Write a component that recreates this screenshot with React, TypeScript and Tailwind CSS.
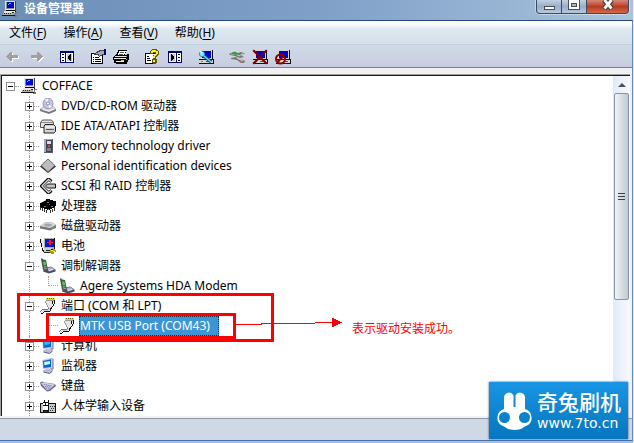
import type { ReactNode } from "react";

function Pix({ children }: { children: ReactNode }) {
  return (
    <svg
      viewBox="0 0 16 16"
      className="size-4 shrink-0"
      shapeRendering="crispEdges"
      aria-hidden="true"
    >
      {children}
    </svg>
  );
}

function ComputerIcon() {
  return (
    <Pix>
      <path d="M4 0h10v10H4z" fill="#444" />
      <path d="M3 0h10v9H3z" fill="#e4e4e4" />
      <path d="M4 1h8v7H4z" fill="#8c8c8c" />
      <path d="M5 1h7v6H5z" fill="#0000d8" />
      <path d="M7 2h2v1H7zM6 3h1v1H6z" fill="#3fd0ff" />
      <path d="M4 9h9v1H4z" fill="#000" />
      <path d="M2 10h11v2H2z" fill="#e8e8e8" />
      <path d="M1 12h11v2H1z" fill="#b0b0b0" />
      <path d="M2 12h1v1H2zM4 12h1v1H4zM6 12h1v1H6zM8 12h1v1H8zM10 11h2v1h-2z" fill="#222" />
      <path d="M0 14h13v1H0zM13 10h1v3h-1z" fill="#111" />
      <path d="M13 11h3v1h-2v2h1v2h-3v-1h1z" fill="#777" />
    </Pix>
  );
}

function DiscIcon() {
  return (
    <Pix>
      <g shapeRendering="auto">
        <path d="M0 11l4-3h9l3 3v2l-7 3-9-3z" fill="#77777f" />
        <path d="M0 11l4-3h9l3 3-7 3z" fill="#d6d6da" />
        <ellipse cx="8" cy="5.500" rx="5" ry="5.300" fill="#c3c3e4" stroke="#8585a4" strokeWidth=".8" />
        <path d="M8 5.500L5 1.500l3-1zM8 5.500l4 3-3 2z" fill="#f2f2ff" />
        <circle cx="8" cy="5.500" r="1.500" fill="#fff" stroke="#6666a0" strokeWidth=".7" />
        <path d="M3 11.500l6 1.500 5-2" fill="none" stroke="#f7f7f7" />
      </g>
    </Pix>
  );
}

function ControllerIcon() {
  return (
    <Pix>
      <g shapeRendering="auto" strokeLinejoin="round">
        <path d="M.500 4.500l2-2.500h9l2 2.500v5H.500z" fill="#e5e5e5" stroke="#444" strokeWidth=".9" />
        <path d="M1 4.500h12" stroke="#888" />
        <path d="M4 8.500L5 6.500h8.500l2 2v5l-1.500 1.500H4z" fill="#d2d2d2" stroke="#222" />
        <path d="M5 9h10" stroke="#fff" />
        <path d="M6 11.500h6" stroke="#555" />
        <path d="M12 11.500h2" stroke="#22a322" />
      </g>
    </Pix>
  );
}

function MemoryIcon() {
  return (
    <Pix>
      <path d="M4 1h9v14H4z" fill="#555b66" />
      <path d="M4 1h8v13H4z" fill="#a5abb5" />
      <path d="M6 2h6v12H6z" fill="#3d4250" />
      <path d="M7 3h4v3H7z" fill="#d8dde6" />
      <path d="M8 7h2v2H8z" fill="#d84a2a" />
      <path d="M7 10h4v3H7z" fill="#7b8393" />
    </Pix>
  );
}

function DiamondIcon() {
  return (
    <Pix>
      <g shapeRendering="auto">
        <path d="M8 2l8 6.500L8 15 0 8.500z" fill="#222" />
        <path d="M8 1l7 6.500L8 14 1 7.500z" fill="#bdbdbd" stroke="#555" strokeWidth=".8" />
      </g>
    </Pix>
  );
}

function ScsiIcon() {
  return (
    <Pix>
      <g shapeRendering="auto" fill="none">
        <path d="M11.500 3.500L8.500 1 1.500 8l7 7 3-2.500" stroke="#111" strokeWidth="3.200" />
        <path d="M11 3.500L8.500 1.500 2 8l6.500 6.500L11 12.500" stroke="#d8d8d8" strokeWidth="1.400" />
        <path d="M7.500 6h8v4h-8L5.500 8z" fill="#c5c5c5" stroke="#111" />
      </g>
    </Pix>
  );
}

function ChipIcon() {
  return (
    <Pix>
      <path d="M6 1h4v1h3v1h3v5h-1v2h-3v1h-2v1H7v-1H4v-1H1V9H0V5h2V4h2V3h2z" fill="#000" />
      <path d="M5 2h1v1H5zM3 3h1v1H3zM1 4h1v1H1zM8 11h1v1H8z" fill="#888" />
      <path d="M0 9h1v3H0zM2 10h1v3H2zM4 11h1v3H4zM6 12h1v3H6zM10 12h1v3h-1zM12 11h1v3h-1zM14 9h1v4h-1z" fill="#333" />
      <path d="M7 4h2v1H7zM9 6h1v1H9zM4 8h2v1H4zM11 8h2v1h-2z" fill="#777" />
    </Pix>
  );
}

function DriveIcon() {
  return (
    <Pix>
      <g shapeRendering="auto">
        <path d="M0 8l5-3.500h7l4 2.500v3l-6 2.500-10-2z" fill="#77777b" />
        <path d="M0 8l5-3.500h7l4 2.500-6 3z" fill="#d9d9db" />
        <ellipse cx="8" cy="7" rx="4" ry="1.500" fill="#a6a6ac" />
        <path d="M12 10.500l2-1" stroke="#51c851" strokeWidth="1.200" />
      </g>
    </Pix>
  );
}

function BatteryIcon() {
  return (
    <Pix>
      <path d="M4 0h11v12H4z" fill="#111" />
      <path d="M4 0h10v11H4z" fill="#b4b4b4" />
      <path d="M5 1h9v8H5z" fill="#0018d8" />
      <path d="M9 2h2v5H9zM7 4h6v1H7z" fill="#f02020" />
      <path d="M0 1h1v4h1v4h1v3h3v2H3v-1H2V9H1V5H0z" fill="#111" />
      <path d="M1 1h1v4H1zM2 2h2v8H2z" fill="#e4e4e4" />
      <path d="M4 10h7v4H4z" fill="#ccc" />
      <path d="M4 14h8v1H4zM6 12h4v1H6z" fill="#222" />
      <path d="M10 12h3v-1h2v1h1v2h-2v2h-3v-1h-1z" fill="#a69b00" />
      <path d="M11 12h2v1h-2zM13 13h2v1h-2z" fill="#fff04a" />
    </Pix>
  );
}

function ModemIcon() {
  return (
    <Pix>
      <g shapeRendering="auto">
        <path d="M5 10l6-1.500 4.500 3v2L9 15.500 3 13.500z" fill="#4a4a60" />
        <path d="M6 10.500l5-1.500 4 2.500-6 2z" fill="#b4b4cc" />
        <path d="M1 1l1-1 1 1.500 3 .5 2 10-3 1.500L3 12z" fill="#4a5252" />
        <path d="M3 3.500l2.500.2.700 3.300-2.500.5z" fill="#3fdc3f" />
        <path d="M4 9l2.300-.3M4.300 10.800l2.300-.3" stroke="#ccc" strokeWidth=".8" />
        <path d="M9 12.500l4-1.200" stroke="#eee" strokeWidth=".8" />
      </g>
    </Pix>
  );
}

function PortIcon() {
  return (
    <Pix>
      <path d="M6 0h9v2H6z" fill="#e8dc28" />
      <path d="M7 0h1v1H7zM9 0h1v1H9zM11 0h1v1h-1zM13 0h1v1h-1z" fill="#5e5a10" />
      <path d="M6 2h9v1H6zM5 3h1v2H5zM6 5h1v2H6zM7 7h1v2H7zM8 9h1v1H8z" fill="#9a9a9a" />
      <path d="M6 3h8v2H6zM7 5h6v2H7zM8 7h4v2H8zM9 9h2v1H9z" fill="#e6e6e6" />
      <path d="M14 2h1v4h-1zM13 6h1v2h-1zM12 8h1v1h-1zM11 9h1v2h-1zM12 3h1v3h-1z" fill="#111" />
      <path d="M8 10h1v1H8zM7 11h1v1H7zM2 11h5v1H2zM1 12h1v1H1zM0 13h1v1H0z" fill="#777" />
      <path d="M9 10h1v2H9zM8 11h1v2H8zM3 12h5v1H3zM2 13h1v1H2zM1 14h1v1H1z" fill="#d4d4d4" />
      <path d="M10 10h1v3h-1zM9 13h1v1H9zM4 13h5v1H4zM3 14h1v1H3zM1 15h2v1H1z" fill="#111" />
    </Pix>
  );
}

function MonitorIcon({ dish = false }: { dish?: boolean }) {
  return (
    <Pix>
      <g shapeRendering="auto">
        <path d="M11 0l2.500 1v10l-3.500 2z" fill="#6c769c" />
        <path d="M2 2l9-2 1.500 1v9.500L3 11z" fill="#c4cce8" />
        <path d="M3 3l8-1.700V9L3.500 10z" fill="#0468d0" />
        <path d="M4 4l6-1v3L4.500 7.200z" fill={dish ? "#c9f4f2" : "#35b0fb"} />
        <path d="M3 12.500L6 11h5l2 1.500-3 3-6-1z" fill="#b8bdd8" />
        <path d="M3.500 14l6 1.500 3-2.500" stroke="#5a628a" fill="none" />
      </g>
    </Pix>
  );
}

function KeyboardIcon() {
  return (
    <Pix>
      <g shapeRendering="auto">
        <path d="M0 4.500l2-1 3 1 10 1.500 1 2-6 5-3 .5L1 8z" fill="#6c6c98" />
        <path d="M1 5l3-.5 11 2-5.500 5L7 12z" fill="#d4d4e8" />
        <path d="M4 6.500l8 1.500M5 8.200l6 1M6 10l4 .5" stroke="#74749e" strokeWidth=".9" strokeDasharray="1.500 .600" />
      </g>
    </Pix>
  );
}

function HidIcon() {
  return (
    <Pix>
      <path d="M0 5h3V4h1V2h1v2h3V2h1v3h7v10H0z" fill="#111" />
      <path d="M1 6h2v8H1zM9 6h6v8H9z" fill="#c9c9c9" />
      <path d="M3 5h2v2H3zM6 5h2v2H6zM3 8h5v4H3z" fill="#fff" />
      <path d="M10 8h1v1h-1zM12 8h1v1h-1zM14 8h1v1h-1zM11 10h1v1h-1zM13 10h1v1h-1zM10 12h1v1h-1zM12 12h1v1h-1zM4 13h3v1H4z" fill="#333" />
    </Pix>
  );
}

function ArrowIcon({ forward = false }: { forward?: boolean }) {
  const d = "M1 7h1V6h1V5h1V4h1V3h2v3h6v3H7v3H5v-1H4v-1H3V9H2V8H1z";
  return (
    <Pix>
      <g transform={forward ? "translate(16 0) scale(-1 1)" : undefined}>
        <path d={d} fill="#fff" transform={forward ? "translate(-1 1)" : "translate(1 1)"} />
        <path d={d} fill="#a0a0a0" />
      </g>
    </Pix>
  );
}

function PaneIcon({ right = false }: { right?: boolean }) {
  return (
    <Pix>
      <path d="M1 2h14v12H1z" fill="#000080" />
      <path d="M2 4h12v9H2z" fill="#fff" />
      {right ? (
        <>
          <path d="M9 4h1v9H9z" fill="#000080" />
          <path d="M3 5h5v7H3z" fill="#c8c8c8" />
          <path d="M4 5h1v7H4zM5 6h1v5H5zM6 7h1v3H6zM11 5h2v1h-2zM11 8h2v1h-2zM11 11h2v1h-2z" fill="#000" />
        </>
      ) : (
        <>
          <path d="M6 4h1v9H6z" fill="#000080" />
          <path d="M8 5h5v7H8z" fill="#c8c8c8" />
          <path d="M11 5h1v7h-1zM10 6h1v5h-1zM9 7h1v3H9zM3 5h2v1H3zM3 8h2v1H3zM3 11h2v1H3z" fill="#000" />
        </>
      )}
    </Pix>
  );
}

function PropertiesIcon() {
  return (
    <Pix>
      <path d="M1 4h12v11H1z" fill="#000" />
      <path d="M2 5h10v9H2z" fill="#fff" />
      <path d="M3 8h1v1H3zM5 8h4v1H5zM3 10h1v1H3zM5 10h6v1H5zM3 12h1v1H3zM5 12h6v1H5z" fill="#000" />
      <path d="M4 4h2V3h1V2h2V1h6v5h-3v1h-2v1H9V7H8V6H4z" fill="#444" />
      <path d="M6 4h2V3h2V2h4v3h-2v1h-2v1H9V5H6z" fill="#aaa" />
      <path d="M14 0h2v6h-2z" fill="#000080" />
    </Pix>
  );
}

function PrinterIcon() {
  return (
    <Pix>
      <path d="M5 1h9v1h-1v2h-1v2H3V5h1V3h1z" fill="#000" />
      <path d="M6 2h7v1h-1v2h-1v1H5V4h1z" fill="#fff" />
      <path d="M7 3h4v1H7zM6 5h4v1H6z" fill="#555" />
      <path d="M2 6h12V5h2v6h-1v2h-1v2H3v-1H1v-3H0V8h1V7h1z" fill="#000" />
      <path d="M2 7h11v1H2zM1 9h12v1H1zM3 12h8v1H3z" fill="#e8e8e8" />
      <path d="M13 7h1v1h-1zM13 10h1v1h-1z" fill="#999" />
      <path d="M8 11h3v1H8z" fill="#e4d800" />
    </Pix>
  );
}

function HelpIcon() {
  return (
    <Pix>
      <path d="M1 4h11v11H1z" fill="#000" />
      <path d="M2 5h9v9H2z" fill="#fff" />
      <path d="M3 7h2v1H3zM3 9h3v1H3zM3 11h4v1H3z" fill="#000" />
      <path d="M7 1h1V0h5v1h1v1h1v4h-1v1h-1v1h-1v2h1v4h-1v1H9v-1H8v-4h1V6h2V4H9v1H6V2h1z" fill="#5c5600" />
      <path d="M8 1h4v1h2v3h-1v1h-1v1h-1v2H9V7h1V6h1V5h1V3H9v1H7V2h1zM9 11h2v2H9z" fill="#ffee1c" />
    </Pix>
  );
}

function ScreenBase() {
  return (
    <>
      <path d="M3 1h12v9h1v5H1v-5h2z" fill="#111" />
      <path d="M2 1h12v9H2zM1 11h14v3H1z" fill="#d5d5d5" />
      <path d="M4 2h9v7H4z" fill="#0000dc" />
      <path d="M3 12h2v1H3z" fill="#20c020" />
      <path d="M8 12h5v1H8z" fill="#555" />
    </>
  );
}

function ScanIcon() {
  return (
    <Pix>
      <ScreenBase />
      <g shapeRendering="auto">
        <path d="M5 6l8 7" stroke="#004878" strokeWidth="3.200" />
        <path d="M5 6l8 7" stroke="#5ce0ff" strokeWidth="1.600" />
        <circle cx="4" cy="5" r="2.700" fill="#7fe8ff" stroke="#0879a0" strokeWidth=".7" />
        <path d="M2 2l2 2" stroke="#fff" strokeWidth="1.500" />
      </g>
    </Pix>
  );
}

function UpdateIcon() {
  return (
    <Pix>
      <g shapeRendering="auto">
        <path d="M0 5l4-2 5 1 3-1 4 1.500-4 1.500 3 2-4 1-5-2-5-1z" fill="#777" />
        <path d="M2 5h5l3 2 4-2.500" stroke="#ccc" fill="none" />
        <path d="M2 4.500l4-2 4 2.500-4 1z" fill="#30a52c" />
        <path d="M2 9l5-1 4 2 3 1 2 1-1 2h-3l-4-3-6-1z" fill="#777" />
        <path d="M8 9l6 3" stroke="#d8d8d8" />
        <path d="M11 12h3v1.500h-3z" fill="#b6783c" />
      </g>
    </Pix>
  );
}

function UninstallIcon() {
  return (
    <Pix>
      <ScreenBase />
      <path d="M2 2l12 12M14 2L2 14" stroke="#7c0000" strokeWidth="2.200" strokeLinecap="square" shapeRendering="auto" />
    </Pix>
  );
}

function DisableIcon() {
  return (
    <Pix>
      <ScreenBase />
      <g shapeRendering="auto" stroke="#8c0000" strokeWidth="2" fill="none">
        <circle cx="5.500" cy="10" r="4.500" />
        <path d="M2.500 13l6-6" />
      </g>
    </Pix>
  );
}

const menus = [
  { label: "文件", key: "F" },
  { label: "操作", key: "A" },
  { label: "查看", key: "V" },
  { label: "帮助", key: "H" },
];

const toolGroups = [
  [
    { name: "后退", icon: <ArrowIcon /> },
    { name: "前进", icon: <ArrowIcon forward /> },
  ],
  [{ name: "显示/隐藏控制台树", icon: <PaneIcon /> }],
  [
    { name: "属性", icon: <PropertiesIcon /> },
    { name: "打印", icon: <PrinterIcon /> },
  ],
  [
    { name: "帮助", icon: <HelpIcon /> },
    { name: "显示/隐藏操作窗格", icon: <PaneIcon right /> },
  ],
  [{ name: "扫描检测硬件改动", icon: <ScanIcon /> }],
  [
    { name: "更新驱动程序", icon: <UpdateIcon /> },
    { name: "卸载", icon: <UninstallIcon /> },
    { name: "禁用", icon: <DisableIcon /> },
  ],
];

type Device = {
  name: string;
  icon: ReactNode;
  child?: { name: string; icon: ReactNode; selected?: boolean };
};

const devices: Device[] = [
  { name: "DVD/CD-ROM 驱动器", icon: <DiscIcon /> },
  { name: "IDE ATA/ATAPI 控制器", icon: <ControllerIcon /> },
  { name: "Memory technology driver", icon: <MemoryIcon /> },
  { name: "Personal identification devices", icon: <DiamondIcon /> },
  { name: "SCSI 和 RAID 控制器", icon: <ScsiIcon /> },
  { name: "处理器", icon: <ChipIcon /> },
  { name: "磁盘驱动器", icon: <DriveIcon /> },
  { name: "电池", icon: <BatteryIcon /> },
  {
    name: "调制解调器",
    icon: <ModemIcon />,
    child: { name: "Agere Systems HDA Modem", icon: <ModemIcon /> },
  },
  {
    name: "端口 (COM 和 LPT)",
    icon: <PortIcon />,
    child: { name: "MTK USB Port (COM43)", icon: <PortIcon />, selected: true },
  },
  { name: "计算机", icon: <MonitorIcon /> },
  { name: "监视器", icon: <MonitorIcon dish /> },
  { name: "键盘", icon: <KeyboardIcon /> },
  { name: "人体学输入设备", icon: <HidIcon /> },
];

function Expander({ open, name }: { open: boolean; name: string }) {
  return (
    <button
      type="button"
      aria-label={name}
      aria-expanded={open}
      className="size-[9px] shrink-0 border border-[#919191] bg-white"
    >
      <svg viewBox="0 0 7 7" className="block size-[7px]" shapeRendering="crispEdges">
        <path d={open ? "M1 3h5v1H1z" : "M1 3h5v1H1zM3 1h1v5H3z"} fill="#000" />
      </svg>
    </button>
  );
}

function Dots() {
  return <span className="flex-1 border-l border-dotted border-[#a0a0a0]" />;
}

function DeviceRow({ device }: { device: Device }) {
  const { name, icon, child } = device;
  return (
    <li className="relative">
      <div className="flex h-5 items-center pl-[23px]">
        <span className="flex h-full w-[9px] flex-col items-center">
          <Dots />
          <Expander open={Boolean(child)} name={name} />
          <Dots />
        </span>
        <span className="mr-px w-[5px] border-t border-dotted border-[#a0a0a0]" />
        {icon}
        <span className="pl-[5px]">{name}</span>
      </div>
      {child && (
        <ul>
          <li className="relative flex h-5 items-center pl-[23px]">
            <span className="flex h-full w-[9px] flex-col items-center">
              <Dots />
            </span>
            <span className="ml-3.5 h-2.5 w-[10px] self-start border-b border-l border-dotted border-[#a0a0a0]" />
            <span className="ml-px flex">{child.icon}</span>
            {child.selected ? (
              <span className="ml-1 border border-dotted border-[#1c2a38] bg-[#3c96d6] pr-2 leading-[18px] text-white">
                {child.name}
              </span>
            ) : (
              <span className="pl-[5px]">{child.name}</span>
            )}
            {child.selected && <Callout />}
          </li>
        </ul>
      )}
      {child?.selected && (
        <span className="absolute -top-[3px] left-[15px] z-10 h-[49px] w-[257px] border-3 border-[#fe0000]" />
      )}
    </li>
  );
}

function Callout() {
  return (
    <>
      <span className="absolute -top-[3px] left-11 z-10 h-[26px] w-[190px] border-3 border-[#fe0000]" />
      <span className="absolute top-0 left-[234px] z-10 flex whitespace-nowrap text-[#fe0000]">
        <svg width="106" height="14" viewBox="0 0 106 14" shapeRendering="crispEdges" aria-hidden="true">
          <path d="M0 8h26v1H0zM25 7h54v1H25zM79 6h20v1H79z" fill="#fe0000" />
          <path d="M96 2h2v1h2v1h2v1h2v1h2v1h-2v1h-2v1h-2v1h-2v1h-2z" fill="#fe0000" />
        </svg>
        <span className="mt-[5px] ml-2.5 leading-4">表示驱动安装成功。</span>
      </span>
    </>
  );
}

function TitleBar() {
  return (
    <header className="flex h-5 items-start justify-between bg-linear-to-r from-[#6c8fb6] via-[#7f9fc8] to-[#a9c4dc] pr-1 pl-0.5">
      <div className="flex items-center gap-[6px]">
        <ComputerIcon />
        <h1 className="leading-[18px] font-bold text-white">设备管理器</h1>
      </div>
      <div className="flex h-3.5 overflow-hidden rounded-b border border-t-0 border-[#3b4a60] bg-[#3b4a60] ring-1 ring-white/40">
        <button
          type="button"
          aria-label="最小化"
          className="flex w-[25px] justify-center border-r border-[#3b4a60] bg-linear-to-b from-[#c3d0e0] via-[#98adc8] to-[#b8cade] pt-1.5"
        >
          <span className="h-1 w-[11px] border border-[#474f5c] bg-white" />
        </button>
        <button
          type="button"
          aria-label="最大化"
          className="flex w-[25px] justify-center border-r border-[#3b4a60] bg-linear-to-b from-[#c3d0e0] via-[#98adc8] to-[#b8cade]"
        >
          <svg width="12" height="10" viewBox="0 0 12 10" shapeRendering="crispEdges">
            <path d="M0 0h12v10H0z" fill="#474f5c" />
            <path d="M1 0h10v9H1z" fill="#fff" />
            <path d="M3 3h6v4H3z" fill="#474f5c" />
            <path d="M4 4h4v2H4z" fill="#9fb4ce" />
          </svg>
        </button>
        <button
          type="button"
          aria-label="关闭"
          className="flex w-[41px] justify-center bg-linear-to-b from-[#d58a78] via-[#b93a22] to-[#cf6a48]"
        >
          <svg width="12" height="10" viewBox="0 0 12 10">
            <path d="M2 0l8 9M10 0L2 9" stroke="#4c3a40" strokeWidth="5" />
            <path d="M2.500 0l7 8.500M9.500 0l-7 8.500" stroke="#fff" strokeWidth="2.800" />
          </svg>
        </button>
      </div>
    </header>
  );
}

function ScrollBar() {
  return (
    <div className="flex w-[17px] flex-col bg-linear-to-r from-[#dfeafc] to-[#f8fafe]">
      <button type="button" aria-label="向上滚动" className="flex h-[17px] items-center justify-center">
        <svg width="8" height="4" viewBox="0 0 8 4">
          <path d="M4 0l4 4H0z" fill="#505050" />
        </svg>
      </button>
      <div className="mx-px flex h-[207px] flex-col items-center justify-center gap-0.5 rounded-xs border border-[#8795a8] bg-linear-to-r from-[#f2f4f6] via-[#d9dee4] to-[#c0c9d3]">
        <span className="h-px w-[7px] bg-[#3c4046]" />
        <span className="h-px w-[7px] bg-[#3c4046]" />
        <span className="h-px w-[7px] bg-[#3c4046]" />
      </div>
    </div>
  );
}

function Logo() {
  return (
    <aside className="absolute right-[5px] bottom-1 z-20 flex h-[57px] w-[139px] items-center gap-[5px] bg-linear-to-b from-[#1795e4] to-[#0676bf] pl-2 text-white shadow-[0_0_2px_#445]">
      <svg width="35" height="38" viewBox="0 0 35 38" className="shrink-0" aria-hidden="true">
        <path
          d="M7 5a5 5 0 0 1 9.500-1.500V15h2V3.500A5 5 0 0 1 28 5v12a9 9 0 0 1 1 17c-3 1-4 4-11.500 4S9 35 6 34A9 9 0 0 1 7 17z"
          fill="#fff"
        />
        <circle cx="7.500" cy="25.500" r="5.500" fill="#0a82cc" />
        <circle cx="27.500" cy="25.500" r="5.500" fill="#0a82cc" />
      </svg>
      <div className="whitespace-nowrap">
        <p className="text-[21px] leading-6 font-medium">奇兔刷机</p>
        <p className="font-['DejaVu_Sans',sans-serif] text-sm leading-[18px]">www.7to.cn</p>
      </div>
    </aside>
  );
}

export default function App() {
  return (
    <div className="relative w-full overflow-hidden border-r border-[#e4f1fb] font-['Noto_Sans','Noto_Sans_CJK_SC',sans-serif] text-xs text-black">
      <TitleBar />
      <div className="border-t border-r border-t-[#24487c] border-r-[#5a88c8] bg-[#f1f1f1]">
        <nav className="flex h-6 items-center gap-[17px] border-b border-[#c3cfdd] bg-linear-to-b from-white from-10% via-[#dde8f0] via-35% to-[#d5e0eb] pl-[9px]">
          {menus.map((menu) => (
            <button key={menu.key} type="button" className="leading-4">
              {menu.label}(<u className="underline-offset-2">{menu.key}</u>)
            </button>
          ))}
        </nav>
        <div className="flex h-[23px] items-center gap-[15px] border-b border-[#808080] bg-linear-to-b from-[#d0dce8] to-[#c8cbe0] pt-0.5 pl-[5px]">
          {toolGroups.map((group, i) => (
            <div key={i} className="flex gap-[7px]">
              {group.map((tool) => (
                <button key={tool.name} type="button" aria-label={tool.name}>
                  {tool.icon}
                </button>
              ))}
            </div>
          ))}
        </div>

        <main className="mt-1.5 mr-0.5 flex border-t border-l border-[#a0a0a0]">
          <div className="flex flex-1 border-t border-l border-[#1a1a1a] bg-white">
            <ul className="flex-1">
              <li>
                <div className="flex h-5 items-center pl-1">
                  <Expander open name="COFFACE" />
                  <span className="w-1.5 border-t border-dotted border-[#a0a0a0]" />
                  <ComputerIcon />
                  <span className="pl-[5px]">COFFACE</span>
                </div>
                <ul>
                  {devices.map((device) => (
                    <DeviceRow key={device.name} device={device} />
                  ))}
                </ul>
              </li>
            </ul>
            <ScrollBar />
          </div>
        </main>
        <footer className="mt-0.5 h-[22px] border-t border-[#8d99a9] bg-[#ced9e5]" />
      </div>
      <div className="h-[3px] border-t border-[#4673b4] bg-[#a9bfdc]" />
      <Logo />
    </div>
  );
}
